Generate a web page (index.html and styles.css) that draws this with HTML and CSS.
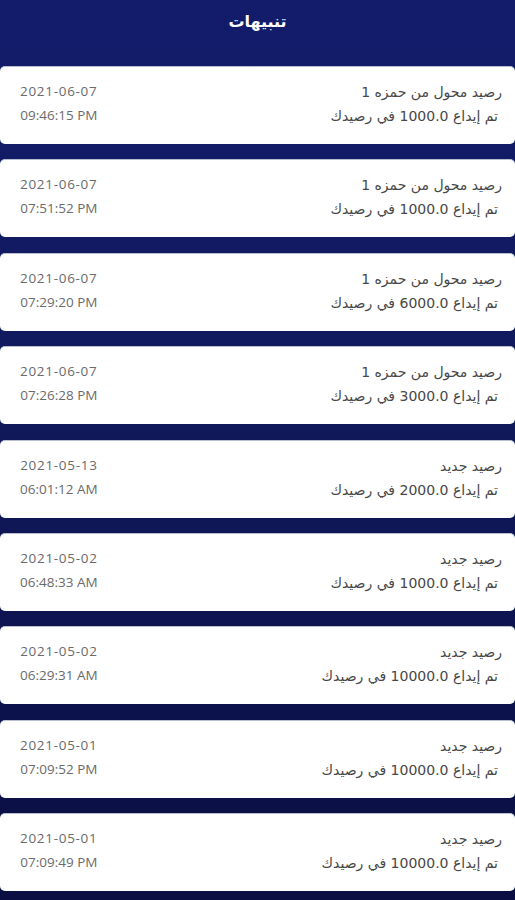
FILE: index.html
```html
<!DOCTYPE html>
<html lang="ar" dir="rtl">
<head>
<meta charset="UTF-8">
<title>تنبيهات</title>
<link rel="stylesheet" href="styles.css">
</head>
<body>
<div class="header">
  <div class="header-title">تنبيهات</div>
</div>
<div class="list">
  <div class="card">
    <div class="msg">
      <div class="msg-title">رصيد محول من حمزه 1</div>
      <div class="msg-body">تم إيداع 1000.0 في رصيدك</div>
    </div>
    <div class="when" dir="ltr">
      <div class="date">2021-06-07</div>
      <div>09:46:15 PM</div>
    </div>
  </div>
  <div class="card">
    <div class="msg">
      <div class="msg-title">رصيد محول من حمزه 1</div>
      <div class="msg-body">تم إيداع 1000.0 في رصيدك</div>
    </div>
    <div class="when" dir="ltr">
      <div class="date">2021-06-07</div>
      <div>07:51:52 PM</div>
    </div>
  </div>
  <div class="card">
    <div class="msg">
      <div class="msg-title">رصيد محول من حمزه 1</div>
      <div class="msg-body">تم إيداع 6000.0 في رصيدك</div>
    </div>
    <div class="when" dir="ltr">
      <div class="date">2021-06-07</div>
      <div>07:29:20 PM</div>
    </div>
  </div>
  <div class="card">
    <div class="msg">
      <div class="msg-title">رصيد محول من حمزه 1</div>
      <div class="msg-body">تم إيداع 3000.0 في رصيدك</div>
    </div>
    <div class="when" dir="ltr">
      <div class="date">2021-06-07</div>
      <div>07:26:28 PM</div>
    </div>
  </div>
  <div class="card">
    <div class="msg">
      <div class="msg-title">رصيد جديد</div>
      <div class="msg-body">تم إيداع 2000.0 في رصيدك</div>
    </div>
    <div class="when" dir="ltr">
      <div class="date">2021-05-13</div>
      <div>06:01:12 AM</div>
    </div>
  </div>
  <div class="card">
    <div class="msg">
      <div class="msg-title">رصيد جديد</div>
      <div class="msg-body">تم إيداع 1000.0 في رصيدك</div>
    </div>
    <div class="when" dir="ltr">
      <div class="date">2021-05-02</div>
      <div>06:48:33 AM</div>
    </div>
  </div>
  <div class="card">
    <div class="msg">
      <div class="msg-title">رصيد جديد</div>
      <div class="msg-body">تم إيداع 10000.0 في رصيدك</div>
    </div>
    <div class="when" dir="ltr">
      <div class="date">2021-05-02</div>
      <div>06:29:31 AM</div>
    </div>
  </div>
  <div class="card">
    <div class="msg">
      <div class="msg-title">رصيد جديد</div>
      <div class="msg-body">تم إيداع 10000.0 في رصيدك</div>
    </div>
    <div class="when" dir="ltr">
      <div class="date">2021-05-01</div>
      <div>07:09:52 PM</div>
    </div>
  </div>
  <div class="card">
    <div class="msg">
      <div class="msg-title">رصيد جديد</div>
      <div class="msg-body">تم إيداع 10000.0 في رصيدك</div>
    </div>
    <div class="when" dir="ltr">
      <div class="date">2021-05-01</div>
      <div>07:09:49 PM</div>
    </div>
  </div>
</div>
</body>
</html>
```

FILE: styles.css
```css
html, body {
  margin: 0;
  padding: 0;
}
body {
  height: 900px;
  overflow: hidden;
  background: linear-gradient(180deg, #131c6b 0%, #111a5e 40%, #0a0e42 100%);
  font-family: "DejaVu Sans", sans-serif;
}
.header {
  height: 66px;
  box-sizing: border-box;
  padding-top: 10px;
  text-align: center;
}
.header-title {
  color: #fff;
  font-size: 16px;
  font-weight: bold;
  line-height: 24px;
}
.list {
  display: flex;
  flex-direction: column;
  gap: 15.4px;
}
.card {
  height: 78px;
  box-sizing: border-box;
  background: #fff;
  border-top: 1px solid #b9bdd0;
  border-radius: 5px;
  display: flex;
  justify-content: space-between;
  align-items: flex-start;
  padding: 13px 13px 0 20px;
}
.msg {
  color: #474747;
  font-size: 14px;
  line-height: 24px;
}
.msg-body {
  padding-right: 4px;
}
.when {
  color: #6a6a6a;
  font-family: "Open Sans", sans-serif;
  font-size: 13.5px;
  line-height: 24px;
  text-align: right;
  margin-top: -1px;
}
.date {
  letter-spacing: 0.7px;
}
```
